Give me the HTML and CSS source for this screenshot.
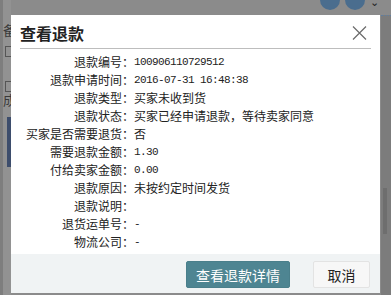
FILE: index.html
```html
<!DOCTYPE html>
<html lang="zh-CN">
<head>
    <meta charset="UTF-8">
    <title>查看退款</title>
    <link rel="stylesheet" href="styles.css">
</head>
<body>
    <div class="page">
        <div class="side">
            <span class="side-char">备</span>
            <span class="side-box"></span>
            <span class="side-box second"></span>
            <span class="side-char">成</span>
            <span class="side-bar"></span>
        </div>
        <div class="tools">
            <span class="tool-dot"></span>
            <span class="tool-dot"></span>
            <span class="tool-caret">⌄</span>
        </div>
        <div class="scrollbar"><span class="thumb"></span></div>
    </div>

    <div class="modal">
        <div class="modal-header">
            <h3>查看退款</h3>
            <button class="close-btn" aria-label="关闭">
                <svg width="15" height="14" viewBox="0 0 15 14">
                    <path d="M1 0.5 L14 13.5 M14 0.5 L1 13.5" stroke="#6b6b6b" stroke-width="1.2" fill="none"/>
                </svg>
            </button>
        </div>

        <div class="modal-body">
            <div class="row"><span class="label">退款编号：</span><span class="value num">100906110729512</span></div>
            <div class="row"><span class="label">退款申请时间：</span><span class="value num">2016-07-31 16:48:38</span></div>
            <div class="row"><span class="label">退款类型：</span><span class="value">买家未收到货</span></div>
            <div class="row"><span class="label">退款状态：</span><span class="value">买家已经申请退款，等待卖家同意</span></div>
            <div class="row"><span class="label">买家是否需要退货：</span><span class="value">否</span></div>
            <div class="row"><span class="label">需要退款金额：</span><span class="value num">1.30</span></div>
            <div class="row"><span class="label">付给卖家金额：</span><span class="value num">0.00</span></div>
            <div class="row"><span class="label">退款原因：</span><span class="value">未按约定时间发货</span></div>
            <div class="row"><span class="label">退款说明：</span><span class="value"></span></div>
            <div class="row"><span class="label">退货运单号：</span><span class="value num">-</span></div>
            <div class="row"><span class="label">物流公司：</span><span class="value num">-</span></div>
        </div>

        <div class="modal-footer">
            <button class="btn btn-primary">查看退款详情</button>
            <button class="btn btn-default">取消</button>
        </div>
    </div>
</body>
</html>
```

FILE: styles.css
```css
* {
    margin: 0;
    padding: 0;
    box-sizing: border-box;
}

body {
    width: 391px;
    height: 295px;
    overflow: hidden;
    background: #8b8b8b;
    font-family: "Noto Sans CJK SC", sans-serif;
    font-size: 12px;
    color: #222;
    position: relative;
}

.page {
    height: 100%;
    display: flex;
}

.side {
    width: 11px;
    border-left: 3px solid #7e7e7e;
    background: #929292;
    display: flex;
    flex-direction: column;
    padding-top: 22px;
    color: #3a3a3a;
    overflow: hidden;
}

.side-char {
    font-size: 13px;
    line-height: 15px;
    margin-left: 0;
}

.side-box {
    width: 10px;
    height: 11px;
    border: 1px solid #555;
    margin: 9px 0 0 2px;
}

.side-box.second {
    margin-top: 24px;
}

.side-bar {
    width: 4px;
    height: 50px;
    background: #3d4d6c;
    margin: 10px 0 0 4px;
}

.tools {
    flex: 1;
    display: flex;
    justify-content: flex-end;
    gap: 5px;
    padding-right: 2px;
    margin-top: -10px;
}

.tool-dot {
    width: 20px;
    height: 20px;
    border-radius: 50%;
    background: #4a6d8e;
}

.tool-caret {
    font-size: 11px;
    line-height: 14px;
    color: #222;
    margin-top: 4px;
}

.scrollbar {
    width: 10px;
    background: #7c7c7c;
    border-top: 1px dotted #5f7ea0;
    margin-top: 15px;
    padding-top: 172px;
}

.thumb {
    display: block;
    width: 4px;
    height: 46px;
    margin-left: 2px;
    background: #6e6e6e;
}

.modal {
    position: absolute;
    left: 11px;
    top: 15px;
    width: 369px;
    height: 278px;
    background: #fff;
    display: flex;
    flex-direction: column;
}

.modal-header {
    height: 34px;
    margin: 0 9px;
    border-bottom: 1px solid #bdbdbd;
    display: flex;
    align-items: center;
    justify-content: space-between;
}

.modal-header h3 {
    font-size: 16px;
    font-weight: 700;
    color: #222;
    padding-top: 2px;
}

.close-btn {
    background: none;
    border: none;
    width: 15px;
    height: 14px;
    margin-right: 4px;
    margin-top: 2px;
    display: flex;
}

.modal-body {
    flex: 1;
    padding-top: 4px;
}

.row {
    display: flex;
    height: 18px;
    line-height: 18px;
}

.label {
    width: 123px;
    text-align: right;
    flex-shrink: 0;
    color: #222;
}

.value {
    color: #222;
}

.num {
    font-family: "Liberation Mono", "Noto Sans CJK SC", monospace;
    font-size: 11px;
    letter-spacing: -0.6px;
}

.modal-footer {
    height: 39px;
    background: #f0f3f4;
    display: flex;
    justify-content: flex-end;
    align-items: flex-start;
    gap: 23px;
    padding: 7px 10px 0 0;
}

.btn {
    height: 27px;
    font-family: "Noto Sans CJK SC", sans-serif;
    font-size: 14px;
    border-radius: 2px;
    cursor: pointer;
}

.btn-primary {
    width: 104px;
    background: #4e8592;
    border: 1px solid #4a7f8b;
    color: #fff;
}

.btn-default {
    width: 57px;
    background: #f7f7f7;
    border: 1px solid #e3e3e3;
    color: #222;
}
```
